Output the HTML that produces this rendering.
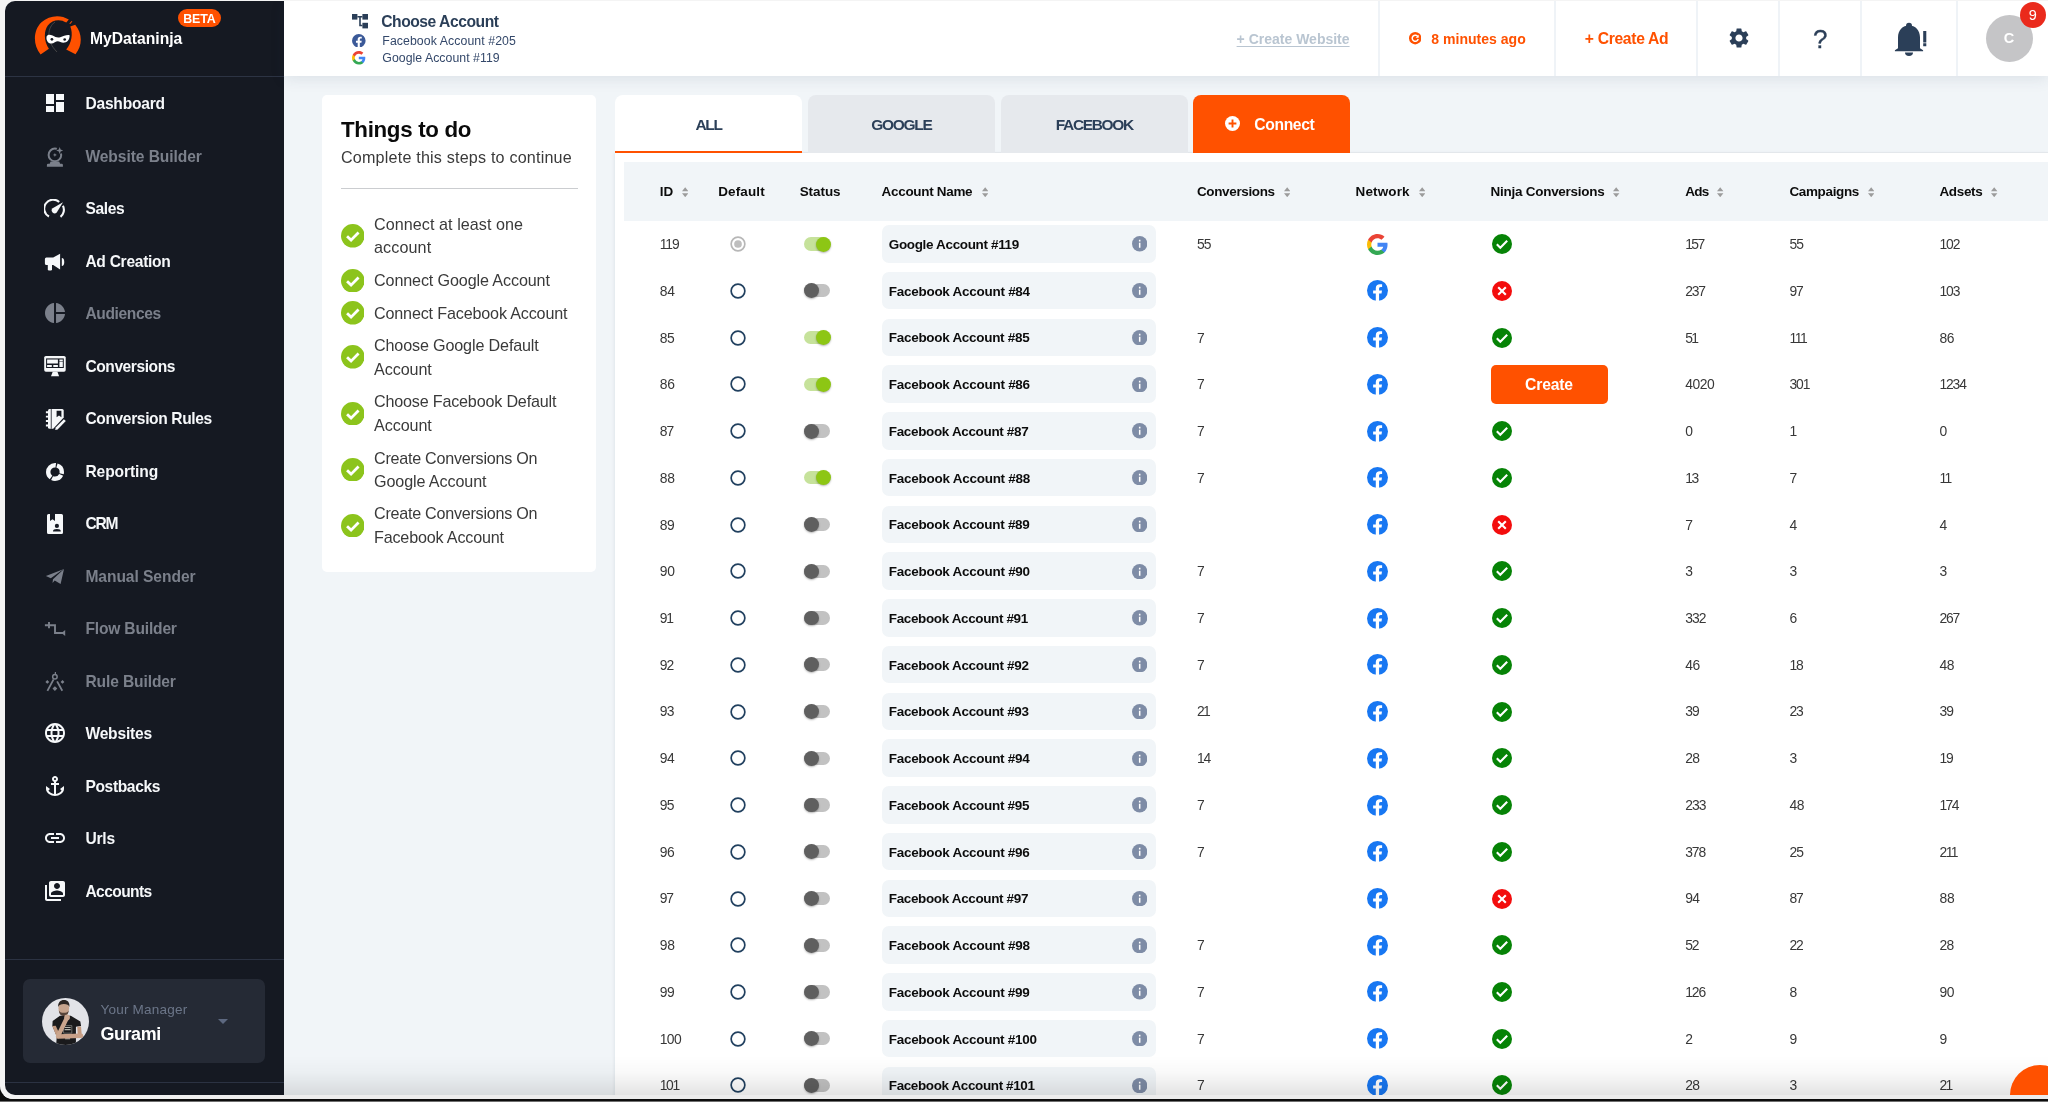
<!DOCTYPE html>
<html lang="en">
<head>
<meta charset="utf-8">
<title>MyDataninja - Accounts</title>
<style>
*{box-sizing:border-box;margin:0;padding:0}
html,body{width:2048px;height:1102px;overflow:hidden}
body{background:#0d0d0d;font-family:"Liberation Sans",sans-serif;position:relative}
.abs{position:absolute}
#frame{position:absolute;left:0;top:0;width:2048px;height:1099px;background:#f4f4f4;border-bottom-left-radius:13px;overflow:hidden}
#bottomline{position:absolute;left:0;top:1101px;width:2048px;height:1px;background:#6f6f6f}
#win{position:absolute;left:5px;top:1px;width:2043px;height:1094px;background:#f1f5f8;border-radius:10px 0 0 10px;overflow:hidden}
/* coordinates inside #win are page coordinates shifted by (-5,-1); use #pg wrapper to cancel */
#pg{position:absolute;left:-5px;top:-1px;width:2048px;height:1102px;will-change:transform}
#side{position:absolute;left:5px;top:0;width:279px;height:1102px;background:#151922}
#top{position:absolute;left:284px;top:0;width:1764px;height:76px;background:#fff;box-shadow:0 3px 14px rgba(40,60,90,.10)}
.vsep{position:absolute;top:0;width:2px;height:76px;background:#eff3f7}
.ic{position:absolute;display:block}
.card{position:absolute;background:#fff;border-radius:5px}
.tab{position:absolute;top:95px;height:58px;border-radius:8px 8px 0 0}
.hdr{position:absolute;left:624.3px;top:162.3px;width:1424px;height:58.3px;background:#f1f5f8}
.nm{position:absolute;left:881.5px;width:274.5px;height:37.6px;border-radius:7px;background:#f1f5f8}
.radio{position:absolute;width:15.4px;height:15.4px;border-radius:50%;border:1.8px solid #21405f;background:#fff}
.radio.on{border-color:#b7b7b7}
.radio.on:after{content:"";position:absolute;left:2.05px;top:2.05px;width:7.7px;height:7.7px;border-radius:50%;background:#bdbdbd}
.tg{position:absolute;width:26.2px;height:13.4px;border-radius:7px;background:#c2c2c2}
.tg:after{content:"";position:absolute;top:-0.7px;left:0px;width:14.8px;height:14.8px;border-radius:50%;background:#5f5f5f;box-shadow:0 1px 2px rgba(0,0,0,.3)}
.tg.on{background:#c6e29b}
.tg.on:after{left:11.8px;background:#8dc614}
</style>
</head>
<body>
<div id="frame"><div id="win"><div id="pg">

<div id="side"></div>
<div class="abs" style="left:5px;top:76px;width:279px;height:1px;background:#2c3343"></div>
<div class="abs" style="left:5px;top:959px;width:279px;height:1px;background:#2b3242"></div>
<div class="abs" style="left:5px;top:1082px;width:279px;height:1px;background:#2b3242"></div>
<svg class="ic" style="left:33px;top:14px" width="50" height="42" viewBox="33 14 50 42">
<path d="M40.6 54.4 C32.5 45 33.2 30 41.5 22.3 C49 15.4 60.5 14.2 68.8 19.6 L66.3 22.6 C60.5 18.6 52.2 19.4 47.8 25.6 C43.3 32 44.2 41.8 48.9 48.8 Z" fill="#ff5100"/>
<path d="M70.3 26.6 L75.2 24.8 C82.6 33.6 82.6 45.6 75.5 54.3 L66.2 49.6 C71.7 43 73.2 34 70.3 26.6 Z" fill="#ff5100"/>
<path d="M69.4 23.5 L71.6 20.9 L72.4 21.5 L70.2 24.1 Z" fill="#ff5100"/>
<path d="M55 22 C47.5 27 45.5 40.5 57 52" fill="none" stroke="#4a4a4a" stroke-width="0.9"/>
<path d="M46.6 36.4 C47.5 34.2 50.2 34.3 52.6 35.6 C55.4 37.2 57.6 38 60.2 37.2 C63.4 36.2 66.5 34.6 69.6 35.2 C69.8 38.6 68 42 64.6 42.6 C61.6 43.1 59.6 41.2 57.8 41.2 C55.8 41.2 53.6 43.8 50.6 43.4 C47.6 43 46 39.6 46.6 36.4 Z" fill="#fff"/>
<circle cx="51.9" cy="39.3" r="1.35" fill="#151922"/><circle cx="64.7" cy="39.5" r="1.35" fill="#151922"/>
</svg>
<div style="position:absolute;left:90.0px;top:29.00px;line-height:20px;font-size:15.68px;font-weight:bold;letter-spacing:0.001px;color:#fff;white-space:nowrap;">MyDataninja</div>
<div class="abs" style="left:178px;top:9px;width:43.2px;height:18.4px;border-radius:9.5px;background:#ff5100"></div>
<div class="abs" style="left:183.3px;top:9.6px;line-height:18px;font-size:12.4px;font-weight:bold;letter-spacing:-0.15px;color:#fff">BETA</div>
<svg class="ic" style="left:43.0px;top:91.0px;color:#f6f8fa" width="24" height="24" viewBox="0 0 24 24" fill="currentColor"><path d="M3 13h8V3H3v10zm0 8h8v-6H3v6zm10 0h8V11h-8v10zm0-18v6h8V3h-8z"/></svg>
<div style="position:absolute;left:85.4px;top:94.00px;line-height:20px;font-size:15.58px;font-weight:bold;letter-spacing:-0.204px;color:#f6f8fa;white-space:nowrap;">Dashboard</div>
<svg class="ic" style="left:44.00px;top:145.50px;color:#7b808b" width="22" height="22" viewBox="0 0 22 22" fill="currentColor"><circle cx="10.9" cy="8.9" r="6.3" fill="none" stroke="currentColor" stroke-width="2"/><circle cx="15.7" cy="4.5" r="3.3" fill="#151922"/><path d="M15.7 1l.9 2.600 2.600.900-2.600.900-.900 2.600-.900-2.600-2.600-.900 2.600-.900z"/><path d="M10.9 6.900l.550 1.450 1.450.550-1.450.550-.550 1.450-.550-1.450-1.450-.550 1.450-.550z"/><path d="M6.600 15.400h8.600l.900 2.300h1.600q1.200 0 1.200 1.200v1.800H2.900v-1.800q0-1.200 1.200-1.200h1.600z"/></svg>
<div style="position:absolute;left:85.4px;top:147.00px;line-height:20px;font-size:15.58px;font-weight:bold;letter-spacing:-0.064px;color:#7b808b;white-space:nowrap;">Website Builder</div>
<svg class="ic" style="left:44.00px;top:198.50px;color:#f6f8fa" width="22" height="20" viewBox="0 0 22 20" fill="currentColor"><path d="M4.96 17.55A8.95 8.95 0 1 1 15.15 3M18.92 6.840A8.950 8.950 0 0 1 16.510 17.920" fill="none" stroke="currentColor" stroke-width="2.100"/><path d="M19 3.300L8.660 9.340A2.900 2.900 0 1 0 12.740 13.460Z"/></svg>
<div style="position:absolute;left:85.4px;top:199.00px;line-height:20px;font-size:15.58px;font-weight:bold;letter-spacing:-0.331px;color:#f6f8fa;white-space:nowrap;">Sales</div>
<svg class="ic" style="left:44.00px;top:249.50px;color:#f6f8fa" width="22" height="22" viewBox="0 0 22 22" fill="currentColor"><path d="M2.400 7.600H9.200L16.100 3.700V19.400L9.200 15H2.400Q.900 15 .900 13.500V9.100Q.900 7.600 2.400 7.600Z"/><path d="M3.800 14.500H8V19.200Q8 20.400 6.800 20.400H5Q3.800 20.400 3.800 19.200Z"/><path d="M17.800 7.900A2.450 4.050 0 0 1 17.800 16Z"/></svg>
<div style="position:absolute;left:85.4px;top:252.00px;line-height:20px;font-size:15.58px;font-weight:bold;letter-spacing:-0.283px;color:#f6f8fa;white-space:nowrap;">Ad Creation</div>
<svg class="ic" style="left:43.0px;top:301.0px;color:#7b808b" width="24" height="24" viewBox="0 0 24 24" fill="currentColor"><path d="M11 2v20c-5.07-.5-9-4.79-9-10s3.93-9.5 9-10zm2.03 0v8.99H22c-.47-4.74-4.24-8.52-8.97-8.99zm0 11.01V22c4.74-.47 8.5-4.25 8.97-8.99h-8.97z"/></svg>
<div style="position:absolute;left:85.4px;top:304.00px;line-height:20px;font-size:15.58px;font-weight:bold;letter-spacing:-0.377px;color:#7b808b;white-space:nowrap;">Audiences</div>
<svg class="ic" style="left:44.00px;top:355.00px;color:#f6f8fa" width="22" height="22" viewBox="0 0 22 22" fill="currentColor"><rect x=".2" y=".9" width="21.5" height="15.9" rx="1.7"/><rect x="2.100" y="3.400" width="17.700" height="9.600" fill="#151922"/><path d="M3.100 4.600h10.800v3.900H3.100zM3.100 10h4.700v2H3.100zM9.300 10h4.600v2H9.300zM15.400 4.600h3.400v1.300h-3.400zM15.400 6.600h3.400v5.400h-3.400z"/><path d="M8.700 16.800h4.700l1.700 4.500H7z"/></svg>
<div style="position:absolute;left:85.4px;top:357.00px;line-height:20px;font-size:15.58px;font-weight:bold;letter-spacing:-0.429px;color:#f6f8fa;white-space:nowrap;">Conversions</div>
<svg class="ic" style="left:45.00px;top:409.00px;color:#f6f8fa" width="21.5" height="21.5" viewBox="0 0 21.5 21.5" fill="currentColor"><path d="M3 1.500Q3 0 4.500 0H17.200Q18.700 0 18.700 1.500V8.600L8.200 19.800H4.500Q3 19.800 3 18.300Z"/><path d="M.9 2.300h3v1.900h-3zM.9 6.700h3v1.900h-3zM.9 11.100h3v1.900h-3zM.9 15.500h3v1.900h-3z"/><path d="M5.800 0h.8v19.800h-.8z" fill="#151922"/><path d="M11.600 1.700h4.800v6.600l-2.400-1.700-2.400 1.700z" fill="#151922"/><path d="M18.900 10.200l1.900 1.900-8.200 8.300-2.400.600.500-2.500z"/></svg>
<div style="position:absolute;left:85.4px;top:409.00px;line-height:20px;font-size:15.58px;font-weight:bold;letter-spacing:-0.37px;color:#f6f8fa;white-space:nowrap;">Conversion Rules</div>
<svg class="ic" style="left:44.95px;top:461.80px;color:#f6f8fa" width="20" height="20" viewBox="0 0 20 20" fill="currentColor"><circle cx="10" cy="10" r="6.800" fill="none" stroke="currentColor" stroke-width="4.400" stroke-dasharray="1.78 1.190 10.680 1.190 17.800 1.190 8.900 0"/></svg>
<div style="position:absolute;left:85.4px;top:462.00px;line-height:20px;font-size:15.58px;font-weight:bold;letter-spacing:-0.085px;color:#f6f8fa;white-space:nowrap;">Reporting</div>
<svg class="ic" style="left:47.00px;top:514.00px;color:#f6f8fa" width="16" height="20" viewBox="0 0 16 20" fill="currentColor"><path d="M0 1.500Q0 0 1.500 0H3V7L5.500 5.300L8 7V0H14.500Q16 0 16 1.500V18.500Q16 20 14.500 20H1.500Q0 20 0 18.500Z"/><circle cx="9.900" cy="11.900" r="2.100" fill="#151922"/><path d="M6 17.500Q6 15.100 9.900 15.100Q13.800 15.100 13.800 17.500Z" fill="#151922"/></svg>
<div style="position:absolute;left:85.4px;top:514.00px;line-height:20px;font-size:15.58px;font-weight:bold;letter-spacing:-1.238px;color:#f6f8fa;white-space:nowrap;">CRM</div>
<svg class="ic" style="left:45.00px;top:568.00px;color:#7b808b" width="20" height="17" viewBox="0 0 20 17" fill="currentColor"><path d="M19 1.100L.9 8L5.800 10.200L15.500 3.300Z"/><path d="M19 1.100L8 11.200L7.500 15.100L9.700 12.600L15.600 16Z"/></svg>
<div style="position:absolute;left:85.4px;top:567.00px;line-height:20px;font-size:15.58px;font-weight:bold;letter-spacing:-0.052px;color:#7b808b;white-space:nowrap;">Manual Sender</div>
<svg class="ic" style="left:44.00px;top:621.00px;color:#7b808b" width="22" height="16" viewBox="0 0 22 16" fill="currentColor"><path d="M.9 4.200H11V12H19" fill="none" stroke="currentColor" stroke-width="1.900"/><path d="M5 1.100V7.200" fill="none" stroke="currentColor" stroke-width="1.900"/><path d="M17.500 12L21.200 8.900V15Z"/></svg>
<div style="position:absolute;left:85.4px;top:619.00px;line-height:20px;font-size:15.58px;font-weight:bold;letter-spacing:-0.175px;color:#7b808b;white-space:nowrap;">Flow Builder</div>
<svg class="ic" style="left:45.00px;top:672.00px;color:#7b808b" width="20" height="20" viewBox="0 0 20 20" fill="currentColor"><path d="M10.400 .100V2.500" fill="none" stroke="currentColor" stroke-width="1.200"/><circle cx="9.900" cy="4.800" r="2.250" fill="none" stroke="currentColor" stroke-width="1.500"/><path d="M8.600 7.300L2.400 18.900M12.100 9.400L17.300 18.800" fill="none" stroke="currentColor" stroke-width="1.800"/><path d="M2.300 8l1.900 1.900-1.900 1.900L.400 9.900zM17.500 8l1.900 1.900-1.900 1.900-1.900-1.900zM9.900 14.200l2.400 2.400-2.400 2.400-2.400-2.400z"/></svg>
<div style="position:absolute;left:85.4px;top:672.00px;line-height:20px;font-size:15.58px;font-weight:bold;letter-spacing:-0.112px;color:#7b808b;white-space:nowrap;">Rule Builder</div>
<svg class="ic" style="left:43.0px;top:721.0px;color:#f6f8fa" width="24" height="24" viewBox="0 0 24 24" fill="currentColor"><path d="M11.99 2C6.47 2 2 6.48 2 12s4.47 10 9.99 10C17.52 22 22 17.52 22 12S17.52 2 11.99 2zm6.93 6h-2.95a15.65 15.65 0 0 0-1.38-3.56A8.03 8.03 0 0 1 18.92 8zM12 4.04c.83 1.2 1.48 2.53 1.91 3.96h-3.82c.43-1.43 1.08-2.76 1.91-3.96zM4.26 14C4.1 13.36 4 12.69 4 12s.1-1.36.26-2h3.38c-.08.66-.14 1.32-.14 2 0 .68.06 1.34.14 2H4.26zm.82 2h2.95c.32 1.25.78 2.45 1.38 3.56A7.987 7.987 0 0 1 5.08 16zm2.95-8H5.08a7.987 7.987 0 0 1 4.33-3.56A15.65 15.65 0 0 0 8.03 8zM12 19.96c-.83-1.2-1.48-2.53-1.91-3.96h3.82c-.43 1.43-1.08 2.76-1.91 3.96zM14.34 14H9.66c-.09-.66-.16-1.32-.16-2 0-.68.07-1.35.16-2h4.68c.09.65.16 1.32.16 2 0 .68-.07 1.34-.16 2zm.25 5.56c.6-1.11 1.06-2.31 1.38-3.56h2.95a8.03 8.03 0 0 1-4.33 3.56zM16.36 14c.08-.66.14-1.32.14-2 0-.68-.06-1.34-.14-2h3.38c.16.64.26 1.31.26 2s-.1 1.36-.26 2h-3.38z"/></svg>
<div style="position:absolute;left:85.4px;top:724.00px;line-height:20px;font-size:15.58px;font-weight:bold;letter-spacing:-0.186px;color:#f6f8fa;white-space:nowrap;">Websites</div>
<svg class="ic" style="left:43.0px;top:773.5px;color:#f6f8fa" width="24" height="24" viewBox="0 0 24 24" fill="currentColor"><path d="M17 15l1.55 1.55c-.96 1.69-3.33 3.04-5.55 3.37V11h3V9h-3V7.82C14.16 7.4 15 6.3 15 5c0-1.65-1.35-3-3-3S9 3.35 9 5c0 1.3.84 2.4 2 2.82V9H8v2h3v8.92c-2.22-.33-4.59-1.68-5.55-3.37L7 15l-4-3v3c0 3.88 4.92 7 9 7s9-3.12 9-7v-3l-4 3zM12 4c.55 0 1 .45 1 1s-.45 1-1 1-1-.45-1-1 .45-1 1-1z"/></svg>
<div style="position:absolute;left:85.4px;top:777.00px;line-height:20px;font-size:15.58px;font-weight:bold;letter-spacing:-0.36px;color:#f6f8fa;white-space:nowrap;">Postbacks</div>
<svg class="ic" style="left:43.0px;top:826.0px;color:#f6f8fa" width="24" height="24" viewBox="0 0 24 24" fill="currentColor"><path d="M3.9 12c0-1.71 1.39-3.1 3.1-3.1h4V7H7c-2.76 0-5 2.24-5 5s2.24 5 5 5h4v-1.9H7c-1.71 0-3.1-1.39-3.1-3.1zM8 13h8v-2H8v2zm9-6h-4v1.9h4c1.71 0 3.1 1.39 3.1 3.1s-1.39 3.1-3.1 3.1h-4V17h4c2.76 0 5-2.24 5-5s-2.24-5-5-5z"/></svg>
<div style="position:absolute;left:85.4px;top:829.00px;line-height:20px;font-size:15.58px;font-weight:bold;letter-spacing:-0.202px;color:#f6f8fa;white-space:nowrap;">Urls</div>
<svg class="ic" style="left:43.0px;top:878.5px;color:#f6f8fa" width="24" height="24" viewBox="0 0 24 24" fill="currentColor"><path d="M4 6H2v14c0 1.1.9 2 2 2h14v-2H4V6zm16-4H8c-1.1 0-2 .9-2 2v12c0 1.1.9 2 2 2h12c1.1 0 2-.9 2-2V4c0-1.1-.9-2-2-2zm-6 2c1.66 0 3 1.34 3 3s-1.34 3-3 3-3-1.34-3-3 1.34-3 3-3zm6 12H8v-1.5c0-1.99 4-3 6-3s6 1.010 6 3V16z"/></svg>
<div style="position:absolute;left:85.4px;top:882.00px;line-height:20px;font-size:15.58px;font-weight:bold;letter-spacing:-0.587px;color:#f6f8fa;white-space:nowrap;">Accounts</div>
<div class="abs" style="left:23px;top:979px;width:242px;height:84px;border-radius:7px;background:#252a35"></div>
<div class="abs" style="left:41.9px;top:997.6px;width:47.2px;height:47.2px;border-radius:50%;overflow:hidden"><svg style="display:block" width="47.2" height="47.2" viewBox="0 0 47 47">
<g><rect width="47" height="47" fill="#e2e3e8"/>
<path d="M10.600 22.900L17.900 17.800H28.700L38.200 23.500L38.900 28L33.800 28.600V47H14.100L14.700 38.100L10.300 28Z" fill="#1a1a1c"/>
<path d="M21.500 27.500h8.200v7.500h-8.200z" fill="none" stroke="#8d8d86" stroke-width=".7"/>
<path d="M22.500 29.500h6M22.500 31.500h6M23 40.500h5" stroke="#b5b5ad" stroke-width="1"/>
<ellipse cx="21.700" cy="10.400" rx="5.300" ry="7.300" fill="#c7a48d"/>
<path d="M16.200 9C15.500 4.500 18.500 1.900 21.800 1.900C25.500 1.900 28 4.500 27.200 9C26.500 6.800 25 6 21.800 6C18.800 6 17 6.800 16.200 9Z" fill="#2b2522"/>
<path d="M16.800 12.500C17.200 16.800 19.800 18 21.700 18C23.600 18 26.200 16.800 26.600 12.500C25.500 14.600 23.800 14.800 21.700 14.800C19.600 14.800 17.900 14.600 16.800 12.500Z" fill="#57443a"/>
<path d="M10.300 28L13.700 27.600L18.100 37.300L14.700 38.900Z" fill="#c39a80"/>
<path d="M35.100 28.600L38.900 28.400L39.600 37.600L35.700 38.200Z" fill="#c39a80"/>
<path d="M38.900 37.600L16 38.400" stroke="#c8a088" stroke-width="4.400" stroke-linecap="round"/>
<path d="M16 37.800L24.600 20.200" stroke="#caa58d" stroke-width="4.300" stroke-linecap="round"/>
<circle cx="25" cy="19.300" r="2.800" fill="#cba790"/>
</g></svg></div>
<div style="position:absolute;left:100.4px;top:1000.00px;line-height:20px;font-size:13.56px;font-weight:normal;letter-spacing:0.21px;color:#6c7689;white-space:nowrap;">Your Manager</div>
<div style="position:absolute;left:100.4px;top:1022.00px;line-height:24px;font-size:17.89px;font-weight:bold;letter-spacing:-0.351px;color:#fff;white-space:nowrap;">Gurami</div>
<div class="abs" style="left:217.6px;top:1019px;width:0;height:0;border-left:5.2px solid transparent;border-right:5.2px solid transparent;border-top:5.6px solid #5d6880"></div>
<div id="top"></div>
<div class="vsep" style="left:1378px"></div>
<div class="vsep" style="left:1554px"></div>
<div class="vsep" style="left:1696px"></div>
<div class="vsep" style="left:1778px"></div>
<div class="vsep" style="left:1860px"></div>
<div class="vsep" style="left:1956px"></div>
<svg class="ic" style="left:352px;top:14.4px" width="16" height="14.4" viewBox="0 0 16 14.4" fill="#2b3f58">
<rect x="0" y="0" width="5.4" height="5.6"/><rect x="10.4" y="0" width="5.6" height="5.6"/><rect x="10.4" y="8.8" width="5.6" height="5.6"/>
<path d="M5.4 2h5v1.600h-5zM7.200 2h1.600v10.300H7.200zM7.200 10.700h3.200v1.600h-3.200z"/></svg>
<div style="position:absolute;left:381.2px;top:12.00px;line-height:20px;font-size:15.68px;font-weight:bold;letter-spacing:-0.473px;color:#2b3f58;white-space:nowrap;">Choose Account</div>
<svg class="ic" style="left:352px;top:33.9px" width="13.6" height="13.6" viewBox="0 0 24 24"><circle cx="12" cy="12" r="12" fill="#3b5998"/><path d="M16.6 15.5l.53-3.47h-3.33V9.78c0-.95.465-1.875 1.955-1.875h1.515V4.95s-1.375-.235-2.69-.235c-2.745 0-4.54 1.665-4.54 4.675v2.64H6.99v3.47h3.05V24h3.76v-8.5z" fill="#fff"/></svg>
<div style="position:absolute;left:382.3px;top:33.00px;line-height:16px;font-size:12.31px;font-weight:normal;letter-spacing:0.078px;color:#34486a;white-space:nowrap;">Facebook Account #205</div>
<svg class="ic" style="left:352px;top:51.1px" width="13.6" height="13.6" viewBox="0 0 24 24"><path d="M23.49 12.27c0-.79-.07-1.54-.19-2.27H12v4.51h6.47c-.29 1.48-1.14 2.73-2.4 3.58v3h3.86c2.26-2.09 3.56-5.17 3.56-8.82z" fill="#4285F4"/><path d="M12 24c3.24 0 5.95-1.08 7.93-2.91l-3.86-3c-1.08.72-2.45 1.16-4.07 1.16-3.13 0-5.78-2.11-6.73-4.96H1.29v3.09C3.26 21.3 7.31 24 12 24z" fill="#34A853"/><path d="M5.27 14.29c-.25-.72-.38-1.49-.38-2.29s.14-1.57.38-2.29V6.62H1.29C.47 8.24 0 10.06 0 12s.47 3.76 1.29 5.38l3.98-3.09z" fill="#FBBC05"/><path d="M12 4.75c1.77 0 3.35.61 4.6 1.8l3.420-3.420C17.950 1.190 15.240 0 12 0 7.310 0 3.260 2.700 1.290 6.620l3.980 3.090c.950-2.850 3.600-4.960 6.730-4.960z" fill="#EA4335"/></svg>
<div style="position:absolute;left:382.3px;top:50.00px;line-height:16px;font-size:12.31px;font-weight:normal;letter-spacing:0.036px;color:#34486a;white-space:nowrap;">Google Account #119</div>
<div class="abs" style="left:1236.6px;top:28.5px;line-height:20px;font-size:14px;font-weight:bold;color:#b9c5d1;white-space:nowrap;text-decoration:underline;text-underline-offset:1.5px">+ Create Website</div>
<svg class="ic" style="left:1408.6px;top:32.4px" width="12.4" height="12.4" viewBox="0 0 24 24"><circle cx="12" cy="12" r="12" fill="#ff5100"/>
<path d="M17.2 9.2A5.9 5.9 0 1 0 17.8 13.6" fill="none" stroke="#fff" stroke-width="2.8"/><path d="M18.8 5.2v6h-6z" fill="#fff"/></svg>
<div class="abs" style="left:1431.3px;top:28.5px;line-height:20px;font-size:14.05px;font-weight:bold;color:#ff5100;white-space:nowrap">8 minutes ago</div>
<div style="position:absolute;left:1584.8px;top:29.00px;line-height:20px;font-size:15.68px;font-weight:bold;letter-spacing:-0.318px;color:#ff5100;white-space:nowrap;">+ Create Ad</div>
<svg class="ic" style="left:1726.6px;top:26.3px" width="24" height="24" viewBox="0 0 24 24" fill="#2b3f58"><path d="M19.14 12.94c.04-.3.06-.61.06-.94 0-.32-.02-.64-.07-.94l2.03-1.58a.49.49 0 0 0 .12-.61l-1.920-3.320a.488.488 0 0 0-.590-.220l-2.390.960c-.500-.380-1.030-.700-1.620-.940l-.360-2.540a.484.484 0 0 0-.480-.410h-3.840c-.240 0-.430.170-.470.410l-.360 2.540c-.590.240-1.130.570-1.620.940l-2.390-.960c-.220-.080-.470 0-.590.220L2.740 8.870c-.120.210-.080.470.120.610l2.030 1.580c-.050.300-.090.630-.090.940s.020.640.070.940l-2.030 1.580a.490.490 0 0 0-.120.610l1.920 3.320c.120.220.370.290.590.220l2.390-.960c.500.380 1.030.700 1.620.940l.360 2.540c.050.240.240.410.480.410h3.840c.240 0 .440-.170.470-.410l.360-2.540c.590-.240 1.130-.560 1.620-.940l2.390.960c.220.080.470 0 .590-.220l1.920-3.320c.120-.220.070-.470-.120-.610l-2.010-1.580zM12 15.600c-1.980 0-3.600-1.620-3.600-3.600s1.620-3.600 3.600-3.600 3.600 1.620 3.600 3.600-1.620 3.600-3.600 3.600z"/></svg>
<div class="abs" style="left:1808.2px;top:23px;width:24px;text-align:center;line-height:32px;font-size:26px;color:#2b3f58;-webkit-text-stroke:0.3px #2b3f58">?</div>
<svg class="ic" style="left:1890px;top:20px" width="40" height="38" viewBox="1890 20 40 38" fill="#2b3f58">
<circle cx="1909" cy="25.7" r="3"/>
<path d="M1898 48.3V37.2C1898 30 1902.6 25.4 1909 25.4S1920 30 1920 37.200V48.300L1923.100 50.300V51.300H1894.900V50.300Z"/>
<path d="M1905 52.500h8a4 3.400 0 0 1-8 0z"/>
<path d="M1923.200 31h3.100v11.500h-3.100zM1923.200 43.200h3.100v3.100h-3.100z"/></svg>
<div class="abs" style="left:1985.5px;top:14.5px;width:47px;height:47px;border-radius:50%;background:#c5c5c7"></div>
<div class="abs" style="left:1985.5px;top:14.5px;width:47px;line-height:47px;text-align:center;font-size:14.5px;font-weight:bold;color:#fff">C</div>
<div class="abs" style="left:2019.8px;top:2px;width:26px;height:26px;border-radius:50%;background:#ea2a1c"></div>
<div class="abs" style="left:2019.8px;top:2px;width:26px;line-height:26px;text-align:center;font-size:14.5px;color:#fff">9</div>
<div class="card" style="left:322px;top:95px;width:274.2px;height:476.6px"></div>
<div style="position:absolute;left:341.0px;top:115.00px;line-height:30px;font-size:22.32px;font-weight:bold;letter-spacing:-0.309px;color:#0a0a0a;white-space:nowrap;">Things to do</div>
<div style="position:absolute;left:341.0px;top:147.00px;line-height:20px;font-size:16.14px;font-weight:normal;letter-spacing:0.192px;color:#3a3a3a;white-space:nowrap;">Complete this steps to continue</div>
<div class="abs" style="left:341px;top:187.6px;width:237px;height:1.2px;background:#cbcdd0"></div>
<svg class="ic" style="left:340.8px;top:224.0px" width="23.6" height="23.6" viewBox="0 0 23 23"><circle cx="11.5" cy="11.5" r="11.5" fill="#8cc41c"/><path d="M5.9 11.9l3.9 3.800 7.300-7.500" fill="none" stroke="#fff" stroke-width="2.700"/></svg>
<div style="position:absolute;left:374.0px;top:214.00px;line-height:20px;font-size:16.14px;font-weight:normal;letter-spacing:0.06px;color:#3a3a3a;white-space:nowrap;">Connect at least one</div>
<div style="position:absolute;left:374.0px;top:237.00px;line-height:20px;font-size:16.14px;font-weight:normal;letter-spacing:0.109px;color:#3a3a3a;white-space:nowrap;">account</div>
<svg class="ic" style="left:340.8px;top:268.5px" width="23.6" height="23.6" viewBox="0 0 23 23"><circle cx="11.5" cy="11.5" r="11.5" fill="#8cc41c"/><path d="M5.9 11.9l3.9 3.800 7.300-7.500" fill="none" stroke="#fff" stroke-width="2.700"/></svg>
<div style="position:absolute;left:374.0px;top:270.00px;line-height:20px;font-size:16.14px;font-weight:normal;letter-spacing:-0.118px;color:#3a3a3a;white-space:nowrap;">Connect Google Account</div>
<svg class="ic" style="left:340.8px;top:301.1px" width="23.6" height="23.6" viewBox="0 0 23 23"><circle cx="11.5" cy="11.5" r="11.5" fill="#8cc41c"/><path d="M5.9 11.9l3.9 3.800 7.300-7.500" fill="none" stroke="#fff" stroke-width="2.700"/></svg>
<div style="position:absolute;left:374.0px;top:303.00px;line-height:20px;font-size:16.14px;font-weight:normal;letter-spacing:-0.161px;color:#3a3a3a;white-space:nowrap;">Connect Facebook Account</div>
<svg class="ic" style="left:340.8px;top:345.4px" width="23.6" height="23.6" viewBox="0 0 23 23"><circle cx="11.5" cy="11.5" r="11.5" fill="#8cc41c"/><path d="M5.9 11.9l3.9 3.800 7.300-7.500" fill="none" stroke="#fff" stroke-width="2.700"/></svg>
<div style="position:absolute;left:374.0px;top:335.00px;line-height:20px;font-size:16.14px;font-weight:normal;letter-spacing:-0.142px;color:#3a3a3a;white-space:nowrap;">Choose Google Default</div>
<div style="position:absolute;left:374.0px;top:359.00px;line-height:20px;font-size:16.14px;font-weight:normal;letter-spacing:-0.079px;color:#3a3a3a;white-space:nowrap;">Account</div>
<svg class="ic" style="left:340.8px;top:401.6px" width="23.6" height="23.6" viewBox="0 0 23 23"><circle cx="11.5" cy="11.5" r="11.5" fill="#8cc41c"/><path d="M5.9 11.9l3.9 3.800 7.300-7.500" fill="none" stroke="#fff" stroke-width="2.700"/></svg>
<div style="position:absolute;left:374.0px;top:391.00px;line-height:20px;font-size:16.14px;font-weight:normal;letter-spacing:-0.185px;color:#3a3a3a;white-space:nowrap;">Choose Facebook Default</div>
<div style="position:absolute;left:374.0px;top:415.00px;line-height:20px;font-size:16.14px;font-weight:normal;letter-spacing:-0.079px;color:#3a3a3a;white-space:nowrap;">Account</div>
<svg class="ic" style="left:340.8px;top:457.8px" width="23.6" height="23.6" viewBox="0 0 23 23"><circle cx="11.5" cy="11.5" r="11.5" fill="#8cc41c"/><path d="M5.9 11.9l3.9 3.800 7.300-7.500" fill="none" stroke="#fff" stroke-width="2.700"/></svg>
<div style="position:absolute;left:374.0px;top:448.00px;line-height:20px;font-size:16.14px;font-weight:normal;letter-spacing:-0.251px;color:#3a3a3a;white-space:nowrap;">Create Conversions On</div>
<div style="position:absolute;left:374.0px;top:471.00px;line-height:20px;font-size:16.14px;font-weight:normal;letter-spacing:-0.105px;color:#3a3a3a;white-space:nowrap;">Google Account</div>
<svg class="ic" style="left:340.8px;top:513.7px" width="23.6" height="23.6" viewBox="0 0 23 23"><circle cx="11.5" cy="11.5" r="11.5" fill="#8cc41c"/><path d="M5.9 11.9l3.9 3.800 7.300-7.500" fill="none" stroke="#fff" stroke-width="2.700"/></svg>
<div style="position:absolute;left:374.0px;top:503.00px;line-height:20px;font-size:16.14px;font-weight:normal;letter-spacing:-0.251px;color:#3a3a3a;white-space:nowrap;">Create Conversions On</div>
<div style="position:absolute;left:374.0px;top:527.00px;line-height:20px;font-size:16.14px;font-weight:normal;letter-spacing:-0.171px;color:#3a3a3a;white-space:nowrap;">Facebook Account</div>
<div class="abs" style="left:615px;top:153px;width:1433px;height:960px;background:#fff;box-shadow:-1px 0 3px rgba(40,60,90,.08)"></div>
<div class="abs" style="left:802px;top:151.8px;width:1246px;height:1.2px;background:#e3e7eb"></div>
<div class="tab" style="left:615px;width:187px;background:#fff;border-bottom:2.2px solid #ff5100"></div>
<div class="tab" style="left:808px;width:187px;background:#e6e9ed"></div>
<div class="tab" style="left:1001px;width:187px;background:#e6e9ed"></div>
<div class="tab" style="left:1193px;width:157px;background:#ff5100"></div>
<div style="position:absolute;left:695.5px;top:115.00px;line-height:20px;font-size:15.48px;font-weight:bold;letter-spacing:-1.315px;color:#2b3f58;white-space:nowrap;">ALL</div>
<div style="position:absolute;left:871.3px;top:115.00px;line-height:20px;font-size:15.48px;font-weight:bold;letter-spacing:-1.27px;color:#2b3f58;white-space:nowrap;">GOOGLE</div>
<div style="position:absolute;left:1055.8px;top:115.00px;line-height:20px;font-size:15.48px;font-weight:bold;letter-spacing:-1.324px;color:#2b3f58;white-space:nowrap;">FACEBOOK</div>
<svg class="ic" style="left:1225.3px;top:116.4px" width="15" height="15" viewBox="0 0 15 15"><circle cx="7.5" cy="7.5" r="7.5" fill="#fff"/><path d="M7.5 3.600v7.800M3.600 7.500h7.800" stroke="#ff5100" stroke-width="1.900"/></svg>
<div style="position:absolute;left:1254.2px;top:115.00px;line-height:20px;font-size:15.68px;font-weight:bold;letter-spacing:-0.34px;color:#fff;white-space:nowrap;">Connect</div>
<div class="hdr"></div>
<div style="position:absolute;left:659.8px;top:182.00px;line-height:20px;font-size:13.47px;font-weight:bold;letter-spacing:-0.127px;color:#0c0c0c;white-space:nowrap;">ID</div>
<svg class="ic" style="left:681.8px;top:186.500px" width="6.400" height="10.400" viewBox="0 0 7 11" fill="#9c9c9c"><path d="M0 4.400L3.500 0 7 4.400zM0 6.600L3.500 11 7 6.600z"/></svg>
<div style="position:absolute;left:718.2px;top:182.00px;line-height:20px;font-size:13.47px;font-weight:bold;letter-spacing:0.13px;color:#0c0c0c;white-space:nowrap;">Default</div>
<div style="position:absolute;left:799.7px;top:182.00px;line-height:20px;font-size:13.47px;font-weight:bold;letter-spacing:-0.062px;color:#0c0c0c;white-space:nowrap;">Status</div>
<div style="position:absolute;left:881.6px;top:182.00px;line-height:20px;font-size:13.47px;font-weight:bold;letter-spacing:-0.303px;color:#0c0c0c;white-space:nowrap;">Account Name</div>
<svg class="ic" style="left:981.6px;top:186.500px" width="6.400" height="10.400" viewBox="0 0 7 11" fill="#9c9c9c"><path d="M0 4.400L3.500 0 7 4.400zM0 6.600L3.500 11 7 6.600z"/></svg>
<div style="position:absolute;left:1197.0px;top:182.00px;line-height:20px;font-size:13.47px;font-weight:bold;letter-spacing:-0.357px;color:#0c0c0c;white-space:nowrap;">Conversions</div>
<svg class="ic" style="left:1283.6px;top:186.500px" width="6.400" height="10.400" viewBox="0 0 7 11" fill="#9c9c9c"><path d="M0 4.400L3.500 0 7 4.400zM0 6.600L3.500 11 7 6.600z"/></svg>
<div style="position:absolute;left:1355.6px;top:182.00px;line-height:20px;font-size:13.47px;font-weight:bold;letter-spacing:0.134px;color:#0c0c0c;white-space:nowrap;">Network</div>
<svg class="ic" style="left:1418.9px;top:186.500px" width="6.400" height="10.400" viewBox="0 0 7 11" fill="#9c9c9c"><path d="M0 4.400L3.500 0 7 4.400zM0 6.600L3.500 11 7 6.600z"/></svg>
<div style="position:absolute;left:1490.5px;top:182.00px;line-height:20px;font-size:13.47px;font-weight:bold;letter-spacing:-0.247px;color:#0c0c0c;white-space:nowrap;">Ninja Conversions</div>
<svg class="ic" style="left:1613.4px;top:186.500px" width="6.400" height="10.400" viewBox="0 0 7 11" fill="#9c9c9c"><path d="M0 4.400L3.500 0 7 4.400zM0 6.600L3.500 11 7 6.600z"/></svg>
<div style="position:absolute;left:1685.2px;top:182.00px;line-height:20px;font-size:13.47px;font-weight:bold;letter-spacing:-0.717px;color:#0c0c0c;white-space:nowrap;">Ads</div>
<svg class="ic" style="left:1717.4px;top:186.500px" width="6.400" height="10.400" viewBox="0 0 7 11" fill="#9c9c9c"><path d="M0 4.400L3.500 0 7 4.400zM0 6.600L3.500 11 7 6.600z"/></svg>
<div style="position:absolute;left:1789.4px;top:182.00px;line-height:20px;font-size:13.47px;font-weight:bold;letter-spacing:-0.331px;color:#0c0c0c;white-space:nowrap;">Campaigns</div>
<svg class="ic" style="left:1867.8px;top:186.500px" width="6.400" height="10.400" viewBox="0 0 7 11" fill="#9c9c9c"><path d="M0 4.400L3.500 0 7 4.400zM0 6.600L3.500 11 7 6.600z"/></svg>
<div style="position:absolute;left:1939.4px;top:182.00px;line-height:20px;font-size:13.47px;font-weight:bold;letter-spacing:-0.313px;color:#0c0c0c;white-space:nowrap;">Adsets</div>
<svg class="ic" style="left:1991.2px;top:186.500px" width="6.400" height="10.400" viewBox="0 0 7 11" fill="#9c9c9c"><path d="M0 4.400L3.500 0 7 4.400zM0 6.600L3.500 11 7 6.600z"/></svg>
<div style="position:absolute;left:659.8px;top:234.00px;line-height:20px;font-size:13.86px;font-weight:normal;letter-spacing:-1.149px;color:#383838;white-space:nowrap;">119</div>
<svg class="ic" style="left:729.5px;top:236.1px" width="16" height="16" viewBox="0 0 16 16"><circle cx="8" cy="8" r="6.85" fill="#fff" stroke="#b7b7b7" stroke-width="1.7"/><circle cx="8" cy="8" r="3.85" fill="#bebebe"/></svg>
<div class="tg on" style="left:804.1px;top:237.4px"></div>
<div class="nm" style="top:225.2px"></div>
<div style="position:absolute;left:888.8px;top:235.00px;line-height:20px;font-size:13.47px;font-weight:bold;letter-spacing:-0.334px;color:#0c0c0c;white-space:nowrap;">Google Account #119</div>
<svg class="ic" style="left:1131.9px;top:236.4px" width="15.4" height="15.4" viewBox="0 0 16 16"><circle cx="8" cy="8" r="8" fill="#7e8ca6"/><path d="M7.200 6.900h1.600v5.300H7.200zM7.200 3.900h1.600v1.700H7.200z" fill="#fff"/></svg>
<div style="position:absolute;left:1197.0px;top:234.00px;line-height:20px;font-size:13.86px;font-weight:normal;letter-spacing:-0.925px;color:#383838;white-space:nowrap;">55</div>
<svg class="ic" style="left:1367px;top:233.6px" width="21" height="21" viewBox="0 0 24 24"><path d="M23.49 12.27c0-.79-.07-1.54-.19-2.27H12v4.51h6.47c-.29 1.48-1.14 2.73-2.4 3.58v3h3.86c2.26-2.09 3.56-5.17 3.56-8.82z" fill="#4285F4"/><path d="M12 24c3.24 0 5.95-1.08 7.93-2.91l-3.86-3c-1.08.72-2.45 1.16-4.07 1.16-3.13 0-5.78-2.11-6.73-4.96H1.29v3.09C3.26 21.3 7.31 24 12 24z" fill="#34A853"/><path d="M5.27 14.29c-.25-.72-.38-1.49-.38-2.29s.14-1.57.38-2.29V6.62H1.29C.47 8.24 0 10.06 0 12s.47 3.76 1.29 5.38l3.98-3.09z" fill="#FBBC05"/><path d="M12 4.75c1.77 0 3.35.61 4.6 1.8l3.420-3.420C17.950 1.190 15.240 0 12 0 7.310 0 3.260 2.700 1.290 6.620l3.980 3.090c.950-2.850 3.600-4.960 6.730-4.960z" fill="#EA4335"/></svg>
<svg class="ic" style="left:1492.300px;top:234.1px" width="20" height="20" viewBox="0 0 20 20"><circle cx="10" cy="10" r="10" fill="#068306"/><path d="M4.800 10.300l3.500 3.400 6.900-7" fill="none" stroke="#fff" stroke-width="2.100"/></svg>
<div style="position:absolute;left:1685.2px;top:234.00px;line-height:20px;font-size:13.86px;font-weight:normal;letter-spacing:-1.572px;color:#383838;white-space:nowrap;">157</div>
<div style="position:absolute;left:1789.4px;top:234.00px;line-height:20px;font-size:13.86px;font-weight:normal;letter-spacing:-0.925px;color:#383838;white-space:nowrap;">55</div>
<div style="position:absolute;left:1939.4px;top:234.00px;line-height:20px;font-size:13.86px;font-weight:normal;letter-spacing:-1.044px;color:#383838;white-space:nowrap;">102</div>
<div style="position:absolute;left:659.8px;top:281.00px;line-height:20px;font-size:13.86px;font-weight:normal;letter-spacing:-0.316px;color:#383838;white-space:nowrap;">84</div>
<svg class="ic" style="left:729.5px;top:282.8px" width="16" height="16" viewBox="0 0 16 16"><circle cx="8" cy="8" r="6.85" fill="#fff" stroke="#21405f" stroke-width="1.7"/></svg>
<div class="tg" style="left:804.1px;top:284.1px"></div>
<div class="nm" style="top:271.9px"></div>
<div style="position:absolute;left:888.8px;top:282.00px;line-height:20px;font-size:13.47px;font-weight:bold;letter-spacing:-0.258px;color:#0c0c0c;white-space:nowrap;">Facebook Account #84</div>
<svg class="ic" style="left:1131.9px;top:283.1px" width="15.4" height="15.4" viewBox="0 0 16 16"><circle cx="8" cy="8" r="8" fill="#7e8ca6"/><path d="M7.200 6.900h1.600v5.300H7.200zM7.200 3.900h1.600v1.700H7.200z" fill="#fff"/></svg>
<svg class="ic" style="left:1367px;top:280.3px" width="21" height="21" viewBox="0 0 24 24"><circle cx="12" cy="12" r="12" fill="#1877f2"/><path d="M16.6 15.5l.53-3.47h-3.33V9.78c0-.95.465-1.875 1.955-1.875h1.515V4.95s-1.375-.235-2.69-.235c-2.745 0-4.54 1.665-4.54 4.675v2.64H6.99v3.47h3.05V24h3.76v-8.5z" fill="#fff"/></svg>
<svg class="ic" style="left:1492.300px;top:280.8px" width="20" height="20" viewBox="0 0 20 20"><circle cx="10" cy="10" r="10" fill="#f30d0d"/><path d="M6.200 6.200l7.600 7.600M13.800 6.200l-7.600 7.600" fill="none" stroke="#fff" stroke-width="2.100"/></svg>
<div style="position:absolute;left:1685.2px;top:281.00px;line-height:20px;font-size:13.86px;font-weight:normal;letter-spacing:-1.212px;color:#383838;white-space:nowrap;">237</div>
<div style="position:absolute;left:1789.4px;top:281.00px;line-height:20px;font-size:13.86px;font-weight:normal;letter-spacing:-1.149px;color:#383838;white-space:nowrap;">97</div>
<div style="position:absolute;left:1939.4px;top:281.00px;line-height:20px;font-size:13.86px;font-weight:normal;letter-spacing:-0.993px;color:#383838;white-space:nowrap;">103</div>
<div style="position:absolute;left:659.8px;top:328.00px;line-height:20px;font-size:13.86px;font-weight:normal;letter-spacing:-0.533px;color:#383838;white-space:nowrap;">85</div>
<svg class="ic" style="left:729.5px;top:329.6px" width="16" height="16" viewBox="0 0 16 16"><circle cx="8" cy="8" r="6.85" fill="#fff" stroke="#21405f" stroke-width="1.7"/></svg>
<div class="tg on" style="left:804.1px;top:330.9px"></div>
<div class="nm" style="top:318.7px"></div>
<div style="position:absolute;left:888.8px;top:328.00px;line-height:20px;font-size:13.47px;font-weight:bold;letter-spacing:-0.279px;color:#0c0c0c;white-space:nowrap;">Facebook Account #85</div>
<svg class="ic" style="left:1131.9px;top:329.9px" width="15.4" height="15.4" viewBox="0 0 16 16"><circle cx="8" cy="8" r="8" fill="#7e8ca6"/><path d="M7.200 6.900h1.600v5.300H7.200zM7.200 3.900h1.600v1.700H7.200z" fill="#fff"/></svg>
<div style="position:absolute;left:1197.0px;top:328.00px;line-height:20px;font-size:13.86px;font-weight:normal;letter-spacing:-1.59px;color:#383838;white-space:nowrap;">7</div>
<svg class="ic" style="left:1367px;top:327.1px" width="21" height="21" viewBox="0 0 24 24"><circle cx="12" cy="12" r="12" fill="#1877f2"/><path d="M16.6 15.5l.53-3.47h-3.33V9.78c0-.95.465-1.875 1.955-1.875h1.515V4.95s-1.375-.235-2.69-.235c-2.745 0-4.54 1.665-4.54 4.675v2.64H6.99v3.47h3.05V24h3.76v-8.5z" fill="#fff"/></svg>
<svg class="ic" style="left:1492.300px;top:327.6px" width="20" height="20" viewBox="0 0 20 20"><circle cx="10" cy="10" r="10" fill="#068306"/><path d="M4.800 10.300l3.500 3.400 6.900-7" fill="none" stroke="#fff" stroke-width="2.100"/></svg>
<div style="position:absolute;left:1685.2px;top:328.00px;line-height:20px;font-size:13.86px;font-weight:normal;letter-spacing:-1.744px;color:#383838;white-space:nowrap;">51</div>
<div style="position:absolute;left:1789.4px;top:328.00px;line-height:20px;font-size:13.86px;font-weight:normal;letter-spacing:-1.353px;color:#383838;white-space:nowrap;">111</div>
<div style="position:absolute;left:1939.4px;top:328.00px;line-height:20px;font-size:13.86px;font-weight:normal;letter-spacing:-0.274px;color:#383838;white-space:nowrap;">86</div>
<div style="position:absolute;left:659.8px;top:374.00px;line-height:20px;font-size:13.86px;font-weight:normal;letter-spacing:-0.274px;color:#383838;white-space:nowrap;">86</div>
<svg class="ic" style="left:729.5px;top:376.3px" width="16" height="16" viewBox="0 0 16 16"><circle cx="8" cy="8" r="6.85" fill="#fff" stroke="#21405f" stroke-width="1.7"/></svg>
<div class="tg on" style="left:804.1px;top:377.6px"></div>
<div class="nm" style="top:365.4px"></div>
<div style="position:absolute;left:888.8px;top:375.00px;line-height:20px;font-size:13.47px;font-weight:bold;letter-spacing:-0.259px;color:#0c0c0c;white-space:nowrap;">Facebook Account #86</div>
<svg class="ic" style="left:1131.9px;top:376.6px" width="15.4" height="15.4" viewBox="0 0 16 16"><circle cx="8" cy="8" r="8" fill="#7e8ca6"/><path d="M7.200 6.900h1.600v5.300H7.200zM7.200 3.900h1.600v1.700H7.200z" fill="#fff"/></svg>
<div style="position:absolute;left:1197.0px;top:374.00px;line-height:20px;font-size:13.86px;font-weight:normal;letter-spacing:-1.59px;color:#383838;white-space:nowrap;">7</div>
<svg class="ic" style="left:1367px;top:373.8px" width="21" height="21" viewBox="0 0 24 24"><circle cx="12" cy="12" r="12" fill="#1877f2"/><path d="M16.6 15.5l.53-3.47h-3.33V9.78c0-.95.465-1.875 1.955-1.875h1.515V4.95s-1.375-.235-2.69-.235c-2.745 0-4.54 1.665-4.54 4.675v2.64H6.99v3.47h3.05V24h3.76v-8.5z" fill="#fff"/></svg>
<div class="abs" style="left:1490.500px;top:364.8px;width:117px;height:39px;border-radius:5px;background:#ff5100"></div>
<div style="position:absolute;left:1525.1px;top:375.00px;line-height:20px;font-size:15.68px;font-weight:bold;letter-spacing:-0.183px;color:#fff;white-space:nowrap;">Create</div>
<div style="position:absolute;left:1685.2px;top:374.00px;line-height:20px;font-size:13.86px;font-weight:normal;letter-spacing:-0.418px;color:#383838;white-space:nowrap;">4020</div>
<div style="position:absolute;left:1789.4px;top:374.00px;line-height:20px;font-size:13.86px;font-weight:normal;letter-spacing:-1.077px;color:#383838;white-space:nowrap;">301</div>
<div style="position:absolute;left:1939.4px;top:374.00px;line-height:20px;font-size:13.86px;font-weight:normal;letter-spacing:-1.118px;color:#383838;white-space:nowrap;">1234</div>
<div style="position:absolute;left:659.8px;top:421.00px;line-height:20px;font-size:13.86px;font-weight:normal;letter-spacing:-0.988px;color:#383838;white-space:nowrap;">87</div>
<svg class="ic" style="left:729.5px;top:423.1px" width="16" height="16" viewBox="0 0 16 16"><circle cx="8" cy="8" r="6.85" fill="#fff" stroke="#21405f" stroke-width="1.7"/></svg>
<div class="tg" style="left:804.1px;top:424.4px"></div>
<div class="nm" style="top:412.2px"></div>
<div style="position:absolute;left:888.8px;top:422.00px;line-height:20px;font-size:13.47px;font-weight:bold;letter-spacing:-0.335px;color:#0c0c0c;white-space:nowrap;">Facebook Account #87</div>
<svg class="ic" style="left:1131.9px;top:423.4px" width="15.4" height="15.4" viewBox="0 0 16 16"><circle cx="8" cy="8" r="8" fill="#7e8ca6"/><path d="M7.200 6.900h1.600v5.300H7.200zM7.200 3.900h1.600v1.700H7.200z" fill="#fff"/></svg>
<div style="position:absolute;left:1197.0px;top:421.00px;line-height:20px;font-size:13.86px;font-weight:normal;letter-spacing:-1.59px;color:#383838;white-space:nowrap;">7</div>
<svg class="ic" style="left:1367px;top:420.6px" width="21" height="21" viewBox="0 0 24 24"><circle cx="12" cy="12" r="12" fill="#1877f2"/><path d="M16.6 15.5l.53-3.47h-3.33V9.78c0-.95.465-1.875 1.955-1.875h1.515V4.95s-1.375-.235-2.69-.235c-2.745 0-4.54 1.665-4.54 4.675v2.64H6.99v3.47h3.05V24h3.76v-8.5z" fill="#fff"/></svg>
<svg class="ic" style="left:1492.300px;top:421.1px" width="20" height="20" viewBox="0 0 20 20"><circle cx="10" cy="10" r="10" fill="#068306"/><path d="M4.800 10.300l3.500 3.400 6.900-7" fill="none" stroke="#fff" stroke-width="2.100"/></svg>
<div style="position:absolute;left:1685.2px;top:421.00px;line-height:20px;font-size:13.86px;font-weight:normal;letter-spacing:-0.008px;color:#383838;white-space:nowrap;">0</div>
<div style="position:absolute;left:1789.4px;top:421.00px;line-height:20px;font-size:13.86px;font-weight:normal;letter-spacing:-1.926px;color:#383838;white-space:nowrap;">1</div>
<div style="position:absolute;left:1939.4px;top:421.00px;line-height:20px;font-size:13.86px;font-weight:normal;letter-spacing:-0.008px;color:#383838;white-space:nowrap;">0</div>
<div style="position:absolute;left:659.8px;top:468.00px;line-height:20px;font-size:13.86px;font-weight:normal;letter-spacing:-0.176px;color:#383838;white-space:nowrap;">88</div>
<svg class="ic" style="left:729.5px;top:469.8px" width="16" height="16" viewBox="0 0 16 16"><circle cx="8" cy="8" r="6.85" fill="#fff" stroke="#21405f" stroke-width="1.7"/></svg>
<div class="tg on" style="left:804.1px;top:471.1px"></div>
<div class="nm" style="top:458.9px"></div>
<div style="position:absolute;left:888.8px;top:469.00px;line-height:20px;font-size:13.47px;font-weight:bold;letter-spacing:-0.246px;color:#0c0c0c;white-space:nowrap;">Facebook Account #88</div>
<svg class="ic" style="left:1131.9px;top:470.1px" width="15.4" height="15.4" viewBox="0 0 16 16"><circle cx="8" cy="8" r="8" fill="#7e8ca6"/><path d="M7.200 6.900h1.600v5.300H7.200zM7.200 3.900h1.600v1.700H7.200z" fill="#fff"/></svg>
<div style="position:absolute;left:1197.0px;top:468.00px;line-height:20px;font-size:13.86px;font-weight:normal;letter-spacing:-1.59px;color:#383838;white-space:nowrap;">7</div>
<svg class="ic" style="left:1367px;top:467.3px" width="21" height="21" viewBox="0 0 24 24"><circle cx="12" cy="12" r="12" fill="#1877f2"/><path d="M16.6 15.5l.53-3.47h-3.33V9.78c0-.95.465-1.875 1.955-1.875h1.515V4.95s-1.375-.235-2.69-.235c-2.745 0-4.54 1.665-4.54 4.675v2.64H6.99v3.47h3.05V24h3.76v-8.5z" fill="#fff"/></svg>
<svg class="ic" style="left:1492.300px;top:467.8px" width="20" height="20" viewBox="0 0 20 20"><circle cx="10" cy="10" r="10" fill="#068306"/><path d="M4.800 10.300l3.500 3.400 6.900-7" fill="none" stroke="#fff" stroke-width="2.100"/></svg>
<div style="position:absolute;left:1685.2px;top:468.00px;line-height:20px;font-size:13.86px;font-weight:normal;letter-spacing:-1.415px;color:#383838;white-space:nowrap;">13</div>
<div style="position:absolute;left:1789.4px;top:468.00px;line-height:20px;font-size:13.86px;font-weight:normal;letter-spacing:-1.59px;color:#383838;white-space:nowrap;">7</div>
<div style="position:absolute;left:1939.4px;top:468.00px;line-height:20px;font-size:13.86px;font-weight:normal;letter-spacing:-1.496px;color:#383838;white-space:nowrap;">11</div>
<div style="position:absolute;left:659.8px;top:515.00px;line-height:20px;font-size:13.86px;font-weight:normal;letter-spacing:-0.449px;color:#383838;white-space:nowrap;">89</div>
<svg class="ic" style="left:729.5px;top:516.5px" width="16" height="16" viewBox="0 0 16 16"><circle cx="8" cy="8" r="6.85" fill="#fff" stroke="#21405f" stroke-width="1.7"/></svg>
<div class="tg" style="left:804.1px;top:517.8px"></div>
<div class="nm" style="top:505.6px"></div>
<div style="position:absolute;left:888.8px;top:515.00px;line-height:20px;font-size:13.47px;font-weight:bold;letter-spacing:-0.273px;color:#0c0c0c;white-space:nowrap;">Facebook Account #89</div>
<svg class="ic" style="left:1131.9px;top:516.8px" width="15.4" height="15.4" viewBox="0 0 16 16"><circle cx="8" cy="8" r="8" fill="#7e8ca6"/><path d="M7.200 6.900h1.600v5.300H7.200zM7.200 3.900h1.600v1.700H7.200z" fill="#fff"/></svg>
<svg class="ic" style="left:1367px;top:514.0px" width="21" height="21" viewBox="0 0 24 24"><circle cx="12" cy="12" r="12" fill="#1877f2"/><path d="M16.6 15.5l.53-3.47h-3.33V9.78c0-.95.465-1.875 1.955-1.875h1.515V4.95s-1.375-.235-2.69-.235c-2.745 0-4.54 1.665-4.54 4.675v2.64H6.99v3.47h3.05V24h3.76v-8.5z" fill="#fff"/></svg>
<svg class="ic" style="left:1492.300px;top:514.5px" width="20" height="20" viewBox="0 0 20 20"><circle cx="10" cy="10" r="10" fill="#f30d0d"/><path d="M6.200 6.200l7.600 7.600M13.800 6.200l-7.600 7.600" fill="none" stroke="#fff" stroke-width="2.100"/></svg>
<div style="position:absolute;left:1685.2px;top:515.00px;line-height:20px;font-size:13.86px;font-weight:normal;letter-spacing:-1.59px;color:#383838;white-space:nowrap;">7</div>
<div style="position:absolute;left:1789.4px;top:515.00px;line-height:20px;font-size:13.86px;font-weight:normal;letter-spacing:-0.456px;color:#383838;white-space:nowrap;">4</div>
<div style="position:absolute;left:1939.4px;top:515.00px;line-height:20px;font-size:13.86px;font-weight:normal;letter-spacing:-0.456px;color:#383838;white-space:nowrap;">4</div>
<div style="position:absolute;left:659.8px;top:561.00px;line-height:20px;font-size:13.86px;font-weight:normal;letter-spacing:-0.232px;color:#383838;white-space:nowrap;">90</div>
<svg class="ic" style="left:729.5px;top:563.3px" width="16" height="16" viewBox="0 0 16 16"><circle cx="8" cy="8" r="6.85" fill="#fff" stroke="#21405f" stroke-width="1.7"/></svg>
<div class="tg" style="left:804.1px;top:564.6px"></div>
<div class="nm" style="top:552.4px"></div>
<div style="position:absolute;left:888.8px;top:562.00px;line-height:20px;font-size:13.47px;font-weight:bold;letter-spacing:-0.258px;color:#0c0c0c;white-space:nowrap;">Facebook Account #90</div>
<svg class="ic" style="left:1131.9px;top:563.6px" width="15.4" height="15.4" viewBox="0 0 16 16"><circle cx="8" cy="8" r="8" fill="#7e8ca6"/><path d="M7.200 6.900h1.600v5.300H7.200zM7.200 3.900h1.600v1.700H7.200z" fill="#fff"/></svg>
<div style="position:absolute;left:1197.0px;top:561.00px;line-height:20px;font-size:13.86px;font-weight:normal;letter-spacing:-1.59px;color:#383838;white-space:nowrap;">7</div>
<svg class="ic" style="left:1367px;top:560.8px" width="21" height="21" viewBox="0 0 24 24"><circle cx="12" cy="12" r="12" fill="#1877f2"/><path d="M16.6 15.5l.53-3.47h-3.33V9.78c0-.95.465-1.875 1.955-1.875h1.515V4.95s-1.375-.235-2.69-.235c-2.745 0-4.54 1.665-4.54 4.675v2.64H6.99v3.47h3.05V24h3.76v-8.5z" fill="#fff"/></svg>
<svg class="ic" style="left:1492.300px;top:561.3px" width="20" height="20" viewBox="0 0 20 20"><circle cx="10" cy="10" r="10" fill="#068306"/><path d="M4.800 10.300l3.500 3.400 6.900-7" fill="none" stroke="#fff" stroke-width="2.100"/></svg>
<div style="position:absolute;left:1685.2px;top:561.00px;line-height:20px;font-size:13.86px;font-weight:normal;letter-spacing:-0.904px;color:#383838;white-space:nowrap;">3</div>
<div style="position:absolute;left:1789.4px;top:561.00px;line-height:20px;font-size:13.86px;font-weight:normal;letter-spacing:-0.904px;color:#383838;white-space:nowrap;">3</div>
<div style="position:absolute;left:1939.4px;top:561.00px;line-height:20px;font-size:13.86px;font-weight:normal;letter-spacing:-0.904px;color:#383838;white-space:nowrap;">3</div>
<div style="position:absolute;left:659.8px;top:608.00px;line-height:20px;font-size:13.86px;font-weight:normal;letter-spacing:-1.331px;color:#383838;white-space:nowrap;">91</div>
<svg class="ic" style="left:729.5px;top:610.0px" width="16" height="16" viewBox="0 0 16 16"><circle cx="8" cy="8" r="6.85" fill="#fff" stroke="#21405f" stroke-width="1.7"/></svg>
<div class="tg" style="left:804.1px;top:611.3px"></div>
<div class="nm" style="top:599.1px"></div>
<div style="position:absolute;left:888.8px;top:609.00px;line-height:20px;font-size:13.47px;font-weight:bold;letter-spacing:-0.358px;color:#0c0c0c;white-space:nowrap;">Facebook Account #91</div>
<svg class="ic" style="left:1131.9px;top:610.3px" width="15.4" height="15.4" viewBox="0 0 16 16"><circle cx="8" cy="8" r="8" fill="#7e8ca6"/><path d="M7.200 6.900h1.600v5.300H7.200zM7.200 3.900h1.600v1.700H7.200z" fill="#fff"/></svg>
<div style="position:absolute;left:1197.0px;top:608.00px;line-height:20px;font-size:13.86px;font-weight:normal;letter-spacing:-1.59px;color:#383838;white-space:nowrap;">7</div>
<svg class="ic" style="left:1367px;top:607.5px" width="21" height="21" viewBox="0 0 24 24"><circle cx="12" cy="12" r="12" fill="#1877f2"/><path d="M16.6 15.5l.53-3.47h-3.33V9.78c0-.95.465-1.875 1.955-1.875h1.515V4.95s-1.375-.235-2.69-.235c-2.745 0-4.54 1.665-4.54 4.675v2.64H6.99v3.47h3.05V24h3.76v-8.5z" fill="#fff"/></svg>
<svg class="ic" style="left:1492.300px;top:608.0px" width="20" height="20" viewBox="0 0 20 20"><circle cx="10" cy="10" r="10" fill="#068306"/><path d="M4.800 10.300l3.500 3.400 6.900-7" fill="none" stroke="#fff" stroke-width="2.100"/></svg>
<div style="position:absolute;left:1685.2px;top:608.00px;line-height:20px;font-size:13.86px;font-weight:normal;letter-spacing:-0.984px;color:#383838;white-space:nowrap;">332</div>
<div style="position:absolute;left:1789.4px;top:608.00px;line-height:20px;font-size:13.86px;font-weight:normal;letter-spacing:-0.372px;color:#383838;white-space:nowrap;">6</div>
<div style="position:absolute;left:1939.4px;top:608.00px;line-height:20px;font-size:13.86px;font-weight:normal;letter-spacing:-1.105px;color:#383838;white-space:nowrap;">267</div>
<div style="position:absolute;left:659.8px;top:655.00px;line-height:20px;font-size:13.86px;font-weight:normal;letter-spacing:-0.897px;color:#383838;white-space:nowrap;">92</div>
<svg class="ic" style="left:729.5px;top:656.8px" width="16" height="16" viewBox="0 0 16 16"><circle cx="8" cy="8" r="6.85" fill="#fff" stroke="#21405f" stroke-width="1.7"/></svg>
<div class="tg" style="left:804.1px;top:658.1px"></div>
<div class="nm" style="top:645.9px"></div>
<div style="position:absolute;left:888.8px;top:656.00px;line-height:20px;font-size:13.47px;font-weight:bold;letter-spacing:-0.32px;color:#0c0c0c;white-space:nowrap;">Facebook Account #92</div>
<svg class="ic" style="left:1131.9px;top:657.1px" width="15.4" height="15.4" viewBox="0 0 16 16"><circle cx="8" cy="8" r="8" fill="#7e8ca6"/><path d="M7.200 6.900h1.600v5.300H7.200zM7.200 3.900h1.600v1.700H7.200z" fill="#fff"/></svg>
<div style="position:absolute;left:1197.0px;top:655.00px;line-height:20px;font-size:13.86px;font-weight:normal;letter-spacing:-1.59px;color:#383838;white-space:nowrap;">7</div>
<svg class="ic" style="left:1367px;top:654.3px" width="21" height="21" viewBox="0 0 24 24"><circle cx="12" cy="12" r="12" fill="#1877f2"/><path d="M16.6 15.5l.53-3.47h-3.33V9.78c0-.95.465-1.875 1.955-1.875h1.515V4.95s-1.375-.235-2.69-.235c-2.745 0-4.54 1.665-4.54 4.675v2.64H6.99v3.47h3.05V24h3.76v-8.5z" fill="#fff"/></svg>
<svg class="ic" style="left:1492.300px;top:654.8px" width="20" height="20" viewBox="0 0 20 20"><circle cx="10" cy="10" r="10" fill="#068306"/><path d="M4.800 10.300l3.500 3.400 6.900-7" fill="none" stroke="#fff" stroke-width="2.100"/></svg>
<div style="position:absolute;left:1685.2px;top:655.00px;line-height:20px;font-size:13.86px;font-weight:normal;letter-spacing:-0.414px;color:#383838;white-space:nowrap;">46</div>
<div style="position:absolute;left:1789.4px;top:655.00px;line-height:20px;font-size:13.86px;font-weight:normal;letter-spacing:-1.051px;color:#383838;white-space:nowrap;">18</div>
<div style="position:absolute;left:1939.4px;top:655.00px;line-height:20px;font-size:13.86px;font-weight:normal;letter-spacing:-0.316px;color:#383838;white-space:nowrap;">48</div>
<div style="position:absolute;left:659.8px;top:701.00px;line-height:20px;font-size:13.86px;font-weight:normal;letter-spacing:-0.82px;color:#383838;white-space:nowrap;">93</div>
<svg class="ic" style="left:729.5px;top:703.5px" width="16" height="16" viewBox="0 0 16 16"><circle cx="8" cy="8" r="6.85" fill="#fff" stroke="#21405f" stroke-width="1.7"/></svg>
<div class="tg" style="left:804.1px;top:704.8px"></div>
<div class="nm" style="top:692.6px"></div>
<div style="position:absolute;left:888.8px;top:702.00px;line-height:20px;font-size:13.47px;font-weight:bold;letter-spacing:-0.317px;color:#0c0c0c;white-space:nowrap;">Facebook Account #93</div>
<svg class="ic" style="left:1131.9px;top:703.8px" width="15.4" height="15.4" viewBox="0 0 16 16"><circle cx="8" cy="8" r="8" fill="#7e8ca6"/><path d="M7.200 6.900h1.600v5.300H7.200zM7.200 3.900h1.600v1.700H7.200z" fill="#fff"/></svg>
<div style="position:absolute;left:1197.0px;top:701.00px;line-height:20px;font-size:13.86px;font-weight:normal;letter-spacing:-1.66px;color:#383838;white-space:nowrap;">21</div>
<svg class="ic" style="left:1367px;top:701.0px" width="21" height="21" viewBox="0 0 24 24"><circle cx="12" cy="12" r="12" fill="#1877f2"/><path d="M16.6 15.5l.53-3.47h-3.33V9.78c0-.95.465-1.875 1.955-1.875h1.515V4.95s-1.375-.235-2.69-.235c-2.745 0-4.54 1.665-4.54 4.675v2.64H6.99v3.47h3.05V24h3.76v-8.5z" fill="#fff"/></svg>
<svg class="ic" style="left:1492.300px;top:701.5px" width="20" height="20" viewBox="0 0 20 20"><circle cx="10" cy="10" r="10" fill="#068306"/><path d="M4.800 10.300l3.500 3.400 6.900-7" fill="none" stroke="#fff" stroke-width="2.100"/></svg>
<div style="position:absolute;left:1685.2px;top:701.00px;line-height:20px;font-size:13.86px;font-weight:normal;letter-spacing:-0.778px;color:#383838;white-space:nowrap;">39</div>
<div style="position:absolute;left:1789.4px;top:701.00px;line-height:20px;font-size:13.86px;font-weight:normal;letter-spacing:-0.988px;color:#383838;white-space:nowrap;">23</div>
<div style="position:absolute;left:1939.4px;top:701.00px;line-height:20px;font-size:13.86px;font-weight:normal;letter-spacing:-0.778px;color:#383838;white-space:nowrap;">39</div>
<div style="position:absolute;left:659.8px;top:748.00px;line-height:20px;font-size:13.86px;font-weight:normal;letter-spacing:-0.526px;color:#383838;white-space:nowrap;">94</div>
<svg class="ic" style="left:729.5px;top:750.2px" width="16" height="16" viewBox="0 0 16 16"><circle cx="8" cy="8" r="6.85" fill="#fff" stroke="#21405f" stroke-width="1.7"/></svg>
<div class="tg" style="left:804.1px;top:751.5px"></div>
<div class="nm" style="top:739.3px"></div>
<div style="position:absolute;left:888.8px;top:749.00px;line-height:20px;font-size:13.47px;font-weight:bold;letter-spacing:-0.281px;color:#0c0c0c;white-space:nowrap;">Facebook Account #94</div>
<svg class="ic" style="left:1131.9px;top:750.5px" width="15.4" height="15.4" viewBox="0 0 16 16"><circle cx="8" cy="8" r="8" fill="#7e8ca6"/><path d="M7.200 6.900h1.600v5.300H7.200zM7.200 3.900h1.600v1.700H7.200z" fill="#fff"/></svg>
<div style="position:absolute;left:1197.0px;top:748.00px;line-height:20px;font-size:13.86px;font-weight:normal;letter-spacing:-1.191px;color:#383838;white-space:nowrap;">14</div>
<svg class="ic" style="left:1367px;top:747.7px" width="21" height="21" viewBox="0 0 24 24"><circle cx="12" cy="12" r="12" fill="#1877f2"/><path d="M16.6 15.5l.53-3.47h-3.33V9.78c0-.95.465-1.875 1.955-1.875h1.515V4.95s-1.375-.235-2.69-.235c-2.745 0-4.54 1.665-4.54 4.675v2.64H6.99v3.47h3.05V24h3.76v-8.5z" fill="#fff"/></svg>
<svg class="ic" style="left:1492.300px;top:748.2px" width="20" height="20" viewBox="0 0 20 20"><circle cx="10" cy="10" r="10" fill="#068306"/><path d="M4.800 10.300l3.500 3.400 6.900-7" fill="none" stroke="#fff" stroke-width="2.100"/></svg>
<div style="position:absolute;left:1685.2px;top:748.00px;line-height:20px;font-size:13.86px;font-weight:normal;letter-spacing:-0.589px;color:#383838;white-space:nowrap;">28</div>
<div style="position:absolute;left:1789.4px;top:748.00px;line-height:20px;font-size:13.86px;font-weight:normal;letter-spacing:-0.904px;color:#383838;white-space:nowrap;">3</div>
<div style="position:absolute;left:1939.4px;top:748.00px;line-height:20px;font-size:13.86px;font-weight:normal;letter-spacing:-1.191px;color:#383838;white-space:nowrap;">19</div>
<div style="position:absolute;left:659.8px;top:795.00px;line-height:20px;font-size:13.86px;font-weight:normal;letter-spacing:-0.673px;color:#383838;white-space:nowrap;">95</div>
<svg class="ic" style="left:729.5px;top:797.0px" width="16" height="16" viewBox="0 0 16 16"><circle cx="8" cy="8" r="6.85" fill="#fff" stroke="#21405f" stroke-width="1.7"/></svg>
<div class="tg" style="left:804.1px;top:798.3px"></div>
<div class="nm" style="top:786.1px"></div>
<div style="position:absolute;left:888.8px;top:796.00px;line-height:20px;font-size:13.47px;font-weight:bold;letter-spacing:-0.295px;color:#0c0c0c;white-space:nowrap;">Facebook Account #95</div>
<svg class="ic" style="left:1131.9px;top:797.3px" width="15.4" height="15.4" viewBox="0 0 16 16"><circle cx="8" cy="8" r="8" fill="#7e8ca6"/><path d="M7.200 6.900h1.600v5.300H7.200zM7.200 3.900h1.600v1.700H7.200z" fill="#fff"/></svg>
<div style="position:absolute;left:1197.0px;top:795.00px;line-height:20px;font-size:13.86px;font-weight:normal;letter-spacing:-1.59px;color:#383838;white-space:nowrap;">7</div>
<svg class="ic" style="left:1367px;top:794.5px" width="21" height="21" viewBox="0 0 24 24"><circle cx="12" cy="12" r="12" fill="#1877f2"/><path d="M16.6 15.5l.53-3.47h-3.33V9.78c0-.95.465-1.875 1.955-1.875h1.515V4.95s-1.375-.235-2.69-.235c-2.745 0-4.54 1.665-4.54 4.675v2.64H6.99v3.47h3.05V24h3.76v-8.5z" fill="#fff"/></svg>
<svg class="ic" style="left:1492.300px;top:795.0px" width="20" height="20" viewBox="0 0 20 20"><circle cx="10" cy="10" r="10" fill="#068306"/><path d="M4.800 10.300l3.500 3.400 6.900-7" fill="none" stroke="#fff" stroke-width="2.100"/></svg>
<div style="position:absolute;left:1685.2px;top:795.00px;line-height:20px;font-size:13.86px;font-weight:normal;letter-spacing:-0.96px;color:#383838;white-space:nowrap;">233</div>
<div style="position:absolute;left:1789.4px;top:795.00px;line-height:20px;font-size:13.86px;font-weight:normal;letter-spacing:-0.316px;color:#383838;white-space:nowrap;">48</div>
<div style="position:absolute;left:1939.4px;top:795.00px;line-height:20px;font-size:13.86px;font-weight:normal;letter-spacing:-1.511px;color:#383838;white-space:nowrap;">174</div>
<div style="position:absolute;left:659.8px;top:842.00px;line-height:20px;font-size:13.86px;font-weight:normal;letter-spacing:-0.414px;color:#383838;white-space:nowrap;">96</div>
<svg class="ic" style="left:729.5px;top:843.7px" width="16" height="16" viewBox="0 0 16 16"><circle cx="8" cy="8" r="6.85" fill="#fff" stroke="#21405f" stroke-width="1.7"/></svg>
<div class="tg" style="left:804.1px;top:845.0px"></div>
<div class="nm" style="top:832.8px"></div>
<div style="position:absolute;left:888.8px;top:843.00px;line-height:20px;font-size:13.47px;font-weight:bold;letter-spacing:-0.274px;color:#0c0c0c;white-space:nowrap;">Facebook Account #96</div>
<svg class="ic" style="left:1131.9px;top:844.0px" width="15.4" height="15.4" viewBox="0 0 16 16"><circle cx="8" cy="8" r="8" fill="#7e8ca6"/><path d="M7.200 6.900h1.600v5.300H7.200zM7.200 3.900h1.600v1.700H7.200z" fill="#fff"/></svg>
<div style="position:absolute;left:1197.0px;top:842.00px;line-height:20px;font-size:13.86px;font-weight:normal;letter-spacing:-1.59px;color:#383838;white-space:nowrap;">7</div>
<svg class="ic" style="left:1367px;top:841.2px" width="21" height="21" viewBox="0 0 24 24"><circle cx="12" cy="12" r="12" fill="#1877f2"/><path d="M16.6 15.5l.53-3.47h-3.33V9.78c0-.95.465-1.875 1.955-1.875h1.515V4.95s-1.375-.235-2.69-.235c-2.745 0-4.54 1.665-4.54 4.675v2.64H6.99v3.47h3.05V24h3.76v-8.5z" fill="#fff"/></svg>
<svg class="ic" style="left:1492.300px;top:841.7px" width="20" height="20" viewBox="0 0 20 20"><circle cx="10" cy="10" r="10" fill="#068306"/><path d="M4.800 10.300l3.500 3.400 6.900-7" fill="none" stroke="#fff" stroke-width="2.100"/></svg>
<div style="position:absolute;left:1685.2px;top:842.00px;line-height:20px;font-size:13.86px;font-weight:normal;letter-spacing:-1.021px;color:#383838;white-space:nowrap;">378</div>
<div style="position:absolute;left:1789.4px;top:842.00px;line-height:20px;font-size:13.86px;font-weight:normal;letter-spacing:-0.946px;color:#383838;white-space:nowrap;">25</div>
<div style="position:absolute;left:1939.4px;top:842.00px;line-height:20px;font-size:13.86px;font-weight:normal;letter-spacing:-1.462px;color:#383838;white-space:nowrap;">211</div>
<div style="position:absolute;left:659.8px;top:888.00px;line-height:20px;font-size:13.86px;font-weight:normal;letter-spacing:-1.149px;color:#383838;white-space:nowrap;">97</div>
<svg class="ic" style="left:729.5px;top:890.5px" width="16" height="16" viewBox="0 0 16 16"><circle cx="8" cy="8" r="6.85" fill="#fff" stroke="#21405f" stroke-width="1.7"/></svg>
<div class="tg" style="left:804.1px;top:891.8px"></div>
<div class="nm" style="top:879.6px"></div>
<div style="position:absolute;left:888.8px;top:889.00px;line-height:20px;font-size:13.47px;font-weight:bold;letter-spacing:-0.349px;color:#0c0c0c;white-space:nowrap;">Facebook Account #97</div>
<svg class="ic" style="left:1131.9px;top:890.8px" width="15.4" height="15.4" viewBox="0 0 16 16"><circle cx="8" cy="8" r="8" fill="#7e8ca6"/><path d="M7.200 6.900h1.600v5.300H7.200zM7.200 3.900h1.600v1.700H7.200z" fill="#fff"/></svg>
<svg class="ic" style="left:1367px;top:888.0px" width="21" height="21" viewBox="0 0 24 24"><circle cx="12" cy="12" r="12" fill="#1877f2"/><path d="M16.6 15.5l.53-3.47h-3.33V9.78c0-.95.465-1.875 1.955-1.875h1.515V4.95s-1.375-.235-2.69-.235c-2.745 0-4.54 1.665-4.54 4.675v2.64H6.99v3.47h3.05V24h3.76v-8.5z" fill="#fff"/></svg>
<svg class="ic" style="left:1492.300px;top:888.5px" width="20" height="20" viewBox="0 0 20 20"><circle cx="10" cy="10" r="10" fill="#f30d0d"/><path d="M6.200 6.200l7.600 7.600M13.800 6.200l-7.600 7.600" fill="none" stroke="#fff" stroke-width="2.100"/></svg>
<div style="position:absolute;left:1685.2px;top:888.00px;line-height:20px;font-size:13.86px;font-weight:normal;letter-spacing:-0.526px;color:#383838;white-space:nowrap;">94</div>
<div style="position:absolute;left:1789.4px;top:888.00px;line-height:20px;font-size:13.86px;font-weight:normal;letter-spacing:-0.988px;color:#383838;white-space:nowrap;">87</div>
<div style="position:absolute;left:1939.4px;top:888.00px;line-height:20px;font-size:13.86px;font-weight:normal;letter-spacing:-0.176px;color:#383838;white-space:nowrap;">88</div>
<div style="position:absolute;left:659.8px;top:935.00px;line-height:20px;font-size:13.86px;font-weight:normal;letter-spacing:-0.316px;color:#383838;white-space:nowrap;">98</div>
<svg class="ic" style="left:729.5px;top:937.2px" width="16" height="16" viewBox="0 0 16 16"><circle cx="8" cy="8" r="6.85" fill="#fff" stroke="#21405f" stroke-width="1.7"/></svg>
<div class="tg" style="left:804.1px;top:938.5px"></div>
<div class="nm" style="top:926.3px"></div>
<div style="position:absolute;left:888.8px;top:936.00px;line-height:20px;font-size:13.47px;font-weight:bold;letter-spacing:-0.262px;color:#0c0c0c;white-space:nowrap;">Facebook Account #98</div>
<svg class="ic" style="left:1131.9px;top:937.5px" width="15.4" height="15.4" viewBox="0 0 16 16"><circle cx="8" cy="8" r="8" fill="#7e8ca6"/><path d="M7.200 6.900h1.600v5.300H7.200zM7.200 3.900h1.600v1.700H7.200z" fill="#fff"/></svg>
<div style="position:absolute;left:1197.0px;top:935.00px;line-height:20px;font-size:13.86px;font-weight:normal;letter-spacing:-1.59px;color:#383838;white-space:nowrap;">7</div>
<svg class="ic" style="left:1367px;top:934.7px" width="21" height="21" viewBox="0 0 24 24"><circle cx="12" cy="12" r="12" fill="#1877f2"/><path d="M16.6 15.5l.53-3.47h-3.33V9.78c0-.95.465-1.875 1.955-1.875h1.515V4.95s-1.375-.235-2.69-.235c-2.745 0-4.54 1.665-4.54 4.675v2.64H6.99v3.47h3.05V24h3.76v-8.5z" fill="#fff"/></svg>
<svg class="ic" style="left:1492.300px;top:935.2px" width="20" height="20" viewBox="0 0 20 20"><circle cx="10" cy="10" r="10" fill="#068306"/><path d="M4.800 10.300l3.500 3.400 6.900-7" fill="none" stroke="#fff" stroke-width="2.100"/></svg>
<div style="position:absolute;left:1685.2px;top:935.00px;line-height:20px;font-size:13.86px;font-weight:normal;letter-spacing:-1.023px;color:#383838;white-space:nowrap;">52</div>
<div style="position:absolute;left:1789.4px;top:935.00px;line-height:20px;font-size:13.86px;font-weight:normal;letter-spacing:-1.002px;color:#383838;white-space:nowrap;">22</div>
<div style="position:absolute;left:1939.4px;top:935.00px;line-height:20px;font-size:13.86px;font-weight:normal;letter-spacing:-0.589px;color:#383838;white-space:nowrap;">28</div>
<div style="position:absolute;left:659.8px;top:982.00px;line-height:20px;font-size:13.86px;font-weight:normal;letter-spacing:-0.456px;color:#383838;white-space:nowrap;">99</div>
<svg class="ic" style="left:729.5px;top:983.9px" width="16" height="16" viewBox="0 0 16 16"><circle cx="8" cy="8" r="6.85" fill="#fff" stroke="#21405f" stroke-width="1.7"/></svg>
<div class="tg" style="left:804.1px;top:985.2px"></div>
<div class="nm" style="top:973.0px"></div>
<div style="position:absolute;left:888.8px;top:983.00px;line-height:20px;font-size:13.47px;font-weight:bold;letter-spacing:-0.277px;color:#0c0c0c;white-space:nowrap;">Facebook Account #99</div>
<svg class="ic" style="left:1131.9px;top:984.2px" width="15.4" height="15.4" viewBox="0 0 16 16"><circle cx="8" cy="8" r="8" fill="#7e8ca6"/><path d="M7.200 6.900h1.600v5.300H7.200zM7.200 3.900h1.600v1.700H7.200z" fill="#fff"/></svg>
<div style="position:absolute;left:1197.0px;top:982.00px;line-height:20px;font-size:13.86px;font-weight:normal;letter-spacing:-1.59px;color:#383838;white-space:nowrap;">7</div>
<svg class="ic" style="left:1367px;top:981.4px" width="21" height="21" viewBox="0 0 24 24"><circle cx="12" cy="12" r="12" fill="#1877f2"/><path d="M16.6 15.5l.53-3.47h-3.33V9.78c0-.95.465-1.875 1.955-1.875h1.515V4.95s-1.375-.235-2.69-.235c-2.745 0-4.54 1.665-4.54 4.675v2.64H6.99v3.47h3.05V24h3.76v-8.5z" fill="#fff"/></svg>
<svg class="ic" style="left:1492.300px;top:981.9px" width="20" height="20" viewBox="0 0 20 20"><circle cx="10" cy="10" r="10" fill="#068306"/><path d="M4.800 10.300l3.500 3.400 6.900-7" fill="none" stroke="#fff" stroke-width="2.100"/></svg>
<div style="position:absolute;left:1685.2px;top:982.00px;line-height:20px;font-size:13.86px;font-weight:normal;letter-spacing:-1.1px;color:#383838;white-space:nowrap;">126</div>
<div style="position:absolute;left:1789.4px;top:982.00px;line-height:20px;font-size:13.86px;font-weight:normal;letter-spacing:-0.176px;color:#383838;white-space:nowrap;">8</div>
<div style="position:absolute;left:1939.4px;top:982.00px;line-height:20px;font-size:13.86px;font-weight:normal;letter-spacing:-0.232px;color:#383838;white-space:nowrap;">90</div>
<div style="position:absolute;left:659.8px;top:1029.00px;line-height:20px;font-size:13.86px;font-weight:normal;letter-spacing:-0.648px;color:#383838;white-space:nowrap;">100</div>
<svg class="ic" style="left:729.5px;top:1030.7px" width="16" height="16" viewBox="0 0 16 16"><circle cx="8" cy="8" r="6.85" fill="#fff" stroke="#21405f" stroke-width="1.7"/></svg>
<div class="tg" style="left:804.1px;top:1032.0px"></div>
<div class="nm" style="top:1019.8px"></div>
<div style="position:absolute;left:888.8px;top:1030.00px;line-height:20px;font-size:13.47px;font-weight:bold;letter-spacing:-0.281px;color:#0c0c0c;white-space:nowrap;">Facebook Account #100</div>
<svg class="ic" style="left:1131.9px;top:1031.0px" width="15.4" height="15.4" viewBox="0 0 16 16"><circle cx="8" cy="8" r="8" fill="#7e8ca6"/><path d="M7.200 6.900h1.600v5.300H7.200zM7.200 3.900h1.600v1.700H7.200z" fill="#fff"/></svg>
<div style="position:absolute;left:1197.0px;top:1029.00px;line-height:20px;font-size:13.86px;font-weight:normal;letter-spacing:-1.59px;color:#383838;white-space:nowrap;">7</div>
<svg class="ic" style="left:1367px;top:1028.2px" width="21" height="21" viewBox="0 0 24 24"><circle cx="12" cy="12" r="12" fill="#1877f2"/><path d="M16.6 15.5l.53-3.47h-3.33V9.78c0-.95.465-1.875 1.955-1.875h1.515V4.95s-1.375-.235-2.69-.235c-2.745 0-4.54 1.665-4.54 4.675v2.64H6.99v3.47h3.05V24h3.76v-8.5z" fill="#fff"/></svg>
<svg class="ic" style="left:1492.300px;top:1028.7px" width="20" height="20" viewBox="0 0 20 20"><circle cx="10" cy="10" r="10" fill="#068306"/><path d="M4.800 10.300l3.500 3.400 6.900-7" fill="none" stroke="#fff" stroke-width="2.100"/></svg>
<div style="position:absolute;left:1685.2px;top:1029.00px;line-height:20px;font-size:13.86px;font-weight:normal;letter-spacing:-1.002px;color:#383838;white-space:nowrap;">2</div>
<div style="position:absolute;left:1789.4px;top:1029.00px;line-height:20px;font-size:13.86px;font-weight:normal;letter-spacing:-0.456px;color:#383838;white-space:nowrap;">9</div>
<div style="position:absolute;left:1939.4px;top:1029.00px;line-height:20px;font-size:13.86px;font-weight:normal;letter-spacing:-0.456px;color:#383838;white-space:nowrap;">9</div>
<div style="position:absolute;left:659.8px;top:1075.00px;line-height:20px;font-size:13.86px;font-weight:normal;letter-spacing:-1.418px;color:#383838;white-space:nowrap;">101</div>
<svg class="ic" style="left:729.5px;top:1077.4px" width="16" height="16" viewBox="0 0 16 16"><circle cx="8" cy="8" r="6.85" fill="#fff" stroke="#21405f" stroke-width="1.7"/></svg>
<div class="tg" style="left:804.1px;top:1078.7px"></div>
<div class="nm" style="top:1066.5px"></div>
<div style="position:absolute;left:888.8px;top:1076.00px;line-height:20px;font-size:13.47px;font-weight:bold;letter-spacing:-0.378px;color:#0c0c0c;white-space:nowrap;">Facebook Account #101</div>
<svg class="ic" style="left:1131.9px;top:1077.7px" width="15.4" height="15.4" viewBox="0 0 16 16"><circle cx="8" cy="8" r="8" fill="#7e8ca6"/><path d="M7.200 6.900h1.600v5.300H7.200zM7.200 3.900h1.600v1.700H7.200z" fill="#fff"/></svg>
<div style="position:absolute;left:1197.0px;top:1075.00px;line-height:20px;font-size:13.86px;font-weight:normal;letter-spacing:-1.59px;color:#383838;white-space:nowrap;">7</div>
<svg class="ic" style="left:1367px;top:1074.9px" width="21" height="21" viewBox="0 0 24 24"><circle cx="12" cy="12" r="12" fill="#1877f2"/><path d="M16.6 15.5l.53-3.47h-3.33V9.78c0-.95.465-1.875 1.955-1.875h1.515V4.95s-1.375-.235-2.69-.235c-2.745 0-4.54 1.665-4.54 4.675v2.64H6.99v3.47h3.05V24h3.76v-8.5z" fill="#fff"/></svg>
<svg class="ic" style="left:1492.300px;top:1075.4px" width="20" height="20" viewBox="0 0 20 20"><circle cx="10" cy="10" r="10" fill="#068306"/><path d="M4.800 10.300l3.500 3.400 6.900-7" fill="none" stroke="#fff" stroke-width="2.100"/></svg>
<div style="position:absolute;left:1685.2px;top:1075.00px;line-height:20px;font-size:13.86px;font-weight:normal;letter-spacing:-0.589px;color:#383838;white-space:nowrap;">28</div>
<div style="position:absolute;left:1789.4px;top:1075.00px;line-height:20px;font-size:13.86px;font-weight:normal;letter-spacing:-0.904px;color:#383838;white-space:nowrap;">3</div>
<div style="position:absolute;left:1939.4px;top:1075.00px;line-height:20px;font-size:13.86px;font-weight:normal;letter-spacing:-1.66px;color:#383838;white-space:nowrap;">21</div>
<div class="abs" style="left:284px;top:1056px;width:1764px;height:40px;background:linear-gradient(rgba(0,0,0,0),rgba(0,0,0,.025) 40%,rgba(0,0,0,.065) 72%,rgba(0,0,0,.115))"></div>
<div class="abs" style="left:2010px;top:1065px;width:60px;height:60px;border-radius:50%;background:#ff5100"></div>
</div></div><div class="abs" style="left:0;top:1095px;width:2048px;height:4px;background:linear-gradient(90deg,#f4f4f4,#ececec 300px)"></div></div><div id="bottomline"></div>
</body>
</html>
